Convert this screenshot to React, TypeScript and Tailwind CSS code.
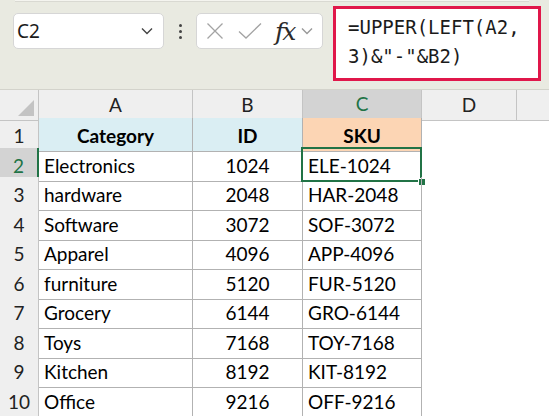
import { Fragment } from 'react';

// ── Datos ─────────────────────────────────────────────────────────────────────

const FILAS: [string, string, string][] = [
  ['Electronics', '1024', 'ELE-1024'],
  ['hardware', '2048', 'HAR-2048'],
  ['Software', '3072', 'SOF-3072'],
  ['Apparel', '4096', 'APP-4096'],
  ['furniture', '5120', 'FUR-5120'],
  ['Grocery', '6144', 'GRO-6144'],
  ['Toys', '7168', 'TOY-7168'],
  ['Kitchen', '8192', 'KIT-8192'],
  ['Office', '9216', 'OFF-9216'],
];

// alturas de fila (2..10) para cuadrar con la captura
const ALTOS = ['h-[29px]', 'h-[30px]', 'h-[29px]', 'h-[30px]', 'h-[29px]', 'h-[30px]', 'h-[29px]', 'h-[30px]', 'h-[29px]'];

const GRID = 'grid grid-cols-[39px_154px_110px_119px_95px_1fr]';

function Chevron({ className }: { className?: string }) {
  return (
    <svg width="12" height="8" viewBox="0 0 12 8" className={className} fill="none">
      <path d="M1 1.5 L6 6.5 L11 1.5" stroke="currentColor" strokeWidth="1.4" />
    </svg>
  );
}

// ── Barra de fórmulas ─────────────────────────────────────────────────────────

function BarraFormulas() {
  return (
    <div className="h-[90px] bg-[#e9eae1] border-b border-[#d3d3cb] flex items-start relative">
      {/* sombra superior */}
      <div className="absolute left-[15px] right-[20px] top-0 h-[2px] bg-[#f4f4ef] border-b border-[#d9d9d2]" />

      {/* cuadro de nombres */}
      <div className="ml-[13px] mt-[13px] w-[151px] h-[36px] bg-white rounded-[5px] border border-[#d6d6d6] flex items-center pl-[3px] pr-[10px]">
        <span className="flex-1 text-[19px] text-[#1b1b1b] font-['Noto_Sans',sans-serif]">C2</span>
        <Chevron className="text-[#444]" />
      </div>

      {/* puntos */}
      <div className="w-[32px] mt-[24px] flex flex-col items-center gap-[3px]">
        <span className="w-[3px] h-[3px] rounded-full bg-[#444]" />
        <span className="w-[3px] h-[3px] rounded-full bg-[#444]" />
        <span className="w-[3px] h-[3px] rounded-full bg-[#444]" />
      </div>

      {/* botones */}
      <div className="mt-[13px] w-[127px] h-[36px] bg-white rounded-[5px] border border-[#d6d6d6] flex items-center pl-[9px]">
        <svg width="18" height="18" viewBox="0 0 18 18" fill="none">
          <path d="M1.5 1.5 L16.5 16.5 M16.5 1.5 L1.5 16.5" stroke="#a3a3a3" strokeWidth="1.3" />
        </svg>
        <svg width="24" height="18" viewBox="0 0 24 18" className="ml-[14px]" fill="none">
          <path d="M1 9.5 L8 16 L23 1.5" stroke="#a3a3a3" strokeWidth="1.3" />
        </svg>
        <span className="ml-[13px] text-[25px] leading-none italic text-[#2b2b2b] font-['DejaVu_Serif',serif] tracking-[-2px]">fx</span>
        <Chevron className="ml-[7px] text-[#999]" />
      </div>

      {/* fórmula */}
      <div className="ml-[10px] mt-[6px] w-[208px] h-[75px] bg-white border-[3px] border-[#e0174a] pl-[12px] pt-[4px] font-['DejaVu_Sans_Mono',monospace] text-[19px] leading-[29px] text-[#1b1b1b] whitespace-pre">
        <div>=UPPER(LEFT(A2,</div>
        <div>3)&amp;"-"&amp;B2)</div>
      </div>
    </div>
  );
}

// ── Hoja ──────────────────────────────────────────────────────────────────────

function Hoja() {
  const celda = "border-r border-b border-[#b2b2b2] px-[5px] pt-[4px] flex items-center text-[19px] text-black";
  const cabFila = "bg-[#efefef] border-r border-[#c4c4c4] border-b border-b-[#d4d4d4] pt-[4px] flex items-center justify-center text-[19px] text-[#222]";
  const cabCol = "bg-[#efefef] border-r border-b border-[#c4c4c4] flex items-center justify-center text-[19px] text-[#222]";

  return (
    <div className="font-['Lato',sans-serif]">
      {/* encabezado de columnas */}
      <div className={`${GRID} h-[28px]`}>
        <div className="bg-[#efefef] border-r border-b border-[#c4c4c4] relative">
          <svg width="16" height="16" viewBox="0 0 16 16" className="absolute right-[4px] bottom-[4px]">
            <path d="M16 0 L16 16 L0 16 Z" fill="#c3c3c3" />
          </svg>
        </div>
        <div className={cabCol}>A</div>
        <div className={cabCol}>B</div>
        <div className="bg-[#d3d3d3] border-r border-[#c4c4c4] border-b-2 border-b-[#217346] flex items-center justify-center text-[19px] text-[#217346]">C</div>
        <div className={cabCol}>D</div>
        <div className="bg-[#efefef] border-b border-[#c4c4c4]" />
      </div>

      {/* fila 1: cabeceras */}
      <div className={`${GRID} h-[30px]`}>
        <div className={cabFila}>1</div>
        <div className={`${celda} bg-[#daeef3] justify-center font-bold`}>Category</div>
        <div className={`${celda} bg-[#daeef3] justify-center font-bold`}>ID</div>
        <div className={`${celda} bg-[#fcd5b4] justify-center font-bold`}>SKU</div>
        <div />
        <div />
      </div>

      {FILAS.map(([cat, id, sku], i) => {
        const sel = i === 0;
        return (
          <div key={sku} className={`${GRID} ${ALTOS[i]}`}>
            {sel ? (
              <div className="bg-[#d3d3d3] border-r-2 border-r-[#217346] border-b border-b-[#d4d4d4] pt-[4px] flex items-center justify-center text-[19px] text-[#217346]">
                {i + 2}
              </div>
            ) : (
              <div className={cabFila}>{i + 2}</div>
            )}
            <div className={celda}>{cat}</div>
            <div className={`${celda} justify-center`}>{id}</div>
            <div className={`${celda} relative`}>
              {sel && (
                <Fragment>
                  <div className="absolute -left-[2px] -top-[1px] -right-[1px] -bottom-[1px] border-2 border-[#217346]" />
                  <div className="absolute -right-[5px] -bottom-[5px] w-[8px] h-[8px] bg-[#217346] border border-white" />
                </Fragment>
              )}
              <span className="relative">{sku}</span>
            </div>
            <div />
            <div />
          </div>
        );
      })}
    </div>
  );
}

export default function App() {
  return (
    <div className="w-[549px] h-[416px] overflow-hidden bg-white">
      <BarraFormulas />
      <Hoja />
    </div>
  );
}
